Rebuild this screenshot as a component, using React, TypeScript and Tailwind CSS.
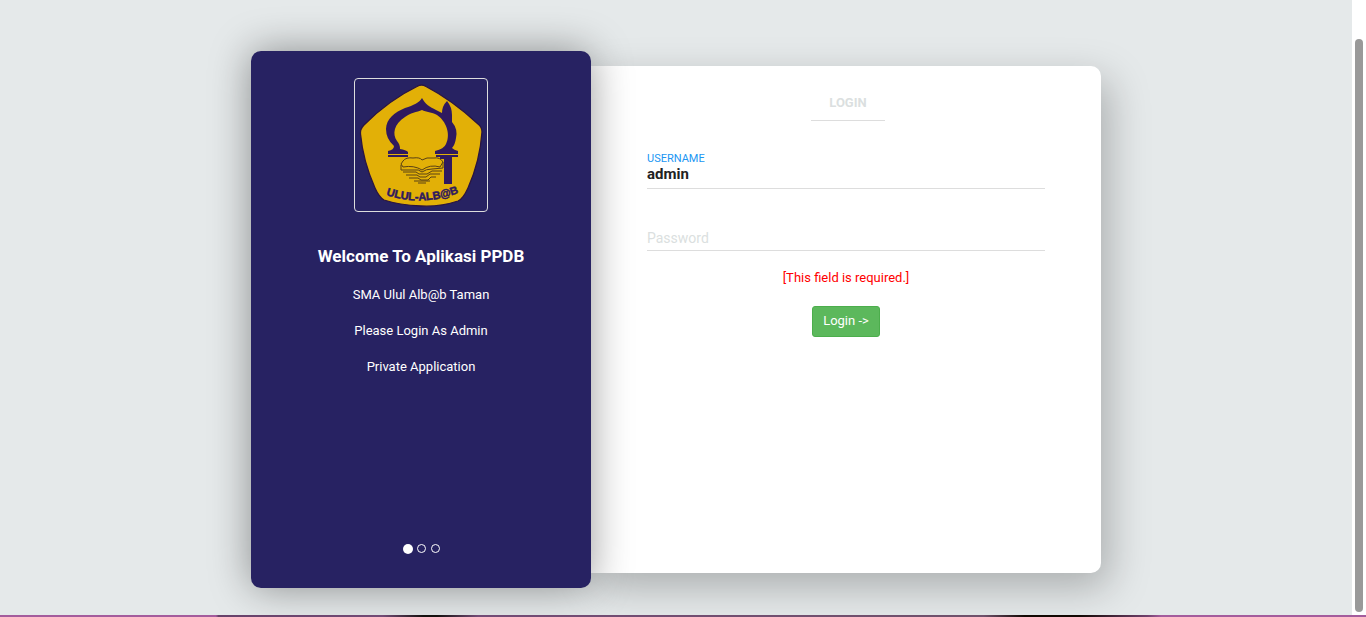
import { useState } from 'react';

function SchoolLogo() {
  return (
    <svg viewBox="0 0 150 150" className="size-full" role="img" aria-label="Ulul-Alb@b">
      <path
        d="M71 16.5 Q75.5 13.5 80 16.5 Q106 30 132 54 Q136 57 136 62 Q134 91 122 118 Q117 129 112 131 Q94 137 75 136 Q53 135 38 130 Q33 127 29 118 Q17 91 14.5 64 Q14 59 18 55 Q43 30 71 16.5Z"
        fill="#e2b007"
        stroke="#2b1540"
        strokeWidth="1.3"
      />
      <g fill="#2f195f">
        <path
          fillRule="evenodd"
          d="M76 28 C79 34 84 37 90 40 L96 43 Q96 36 101 31 Q106 37 106 45 V52 Q112 59 110 68 Q109 75 106 78 Q108 80 112 81 V84 H89 V81 Q98 79 100 74 C105 64 100 51 91 45 C86 42 80 42 76 40 C71 42 64 43 59 47 C48 54 46 64 51 71 Q54 74 54 79 Q60 80 62 82 V84 H42 V81 Q48 80 48 76 Q40 69 40 59 C40 49 49 42 59 38 C68 35 73 33 76 28Z"
        />
        <path d="M42 85H62V87H42ZM90 85H112V87H90ZM98 87H106V114H98Z" />
        <path d="M94 87H100V89H94Z" />
      </g>
      <g fill="none" stroke="#594016" strokeWidth="1">
        <path d="M57 91 Q60 87 67 88 Q74 87 76 90 Q80 87 88 88 Q94 87 97 92 L94 97 Q84 94 76 100 Q68 95 57 97 L55 94Z" />
        <path d="M55 95V100H67Q73 99 76 102Q80 99 86 99L97 98V92M57 102H70L73 104H81L86 101H96M60 105H71L74 107H80L84 104H94M63 108H72L75 110H82L85 107H90M68 111H84M72 113H80" />
      </g>
      <path id="logo-name" d="M40 125 Q75 137 113 123" fill="none" />
      <text
        className="font-['Liberation_Sans'] text-[11px] font-bold"
        fill="#2f195f"
        stroke="#2f195f"
        strokeWidth=".5"
      >
        <textPath href="#logo-name" startOffset="50%" textAnchor="middle">
          ULUL-ALB@B
        </textPath>
      </text>
    </svg>
  );
}

function WelcomePanel() {
  return (
    <section className="z-10 flex w-2/5 flex-col items-center rounded-[10px] bg-[#272262] px-6 pt-[27px] pb-[34px] text-center text-white shadow-[0_0_40px_rgba(0,0,0,0.4)]">
      <div className="size-[134px] overflow-hidden rounded-[4px] border border-[#dddddd]">
        <div className="-m-[9px] size-[150px]">
          <SchoolLogo />
        </div>
      </div>
      <h1 className="mt-8 text-[17px] leading-6 font-bold">Welcome To Aplikasi PPDB</h1>
      <div className="mt-[17px] flex flex-col gap-4 text-[13px] leading-5">
        <p>SMA Ulul Alb@b Taman</p>
        <p>Please Login As Admin</p>
        <p>Private Application</p>
      </div>
      <div className="mt-auto flex items-start gap-1" aria-hidden="true">
        <span className="size-[10px] rounded-full bg-white" />
        <span className="size-[9px] rounded-full border border-white" />
        <span className="ml-[1px] size-[9px] rounded-full border border-white" />
      </div>
    </section>
  );
}

function LoginForm() {
  const [username, setUsername] = useState('admin');
  const [password, setPassword] = useState('');

  return (
    <form
      className="my-[15px] flex flex-1 flex-col items-center rounded-r-[10px] bg-white px-14 pt-[26px] shadow-[8px_14px_40px_rgba(0,0,0,0.26)]"
      onSubmit={(e) => e.preventDefault()}
    >
      <h2 className="ml-1 border-b border-[#dddddd] px-[18px] pt-[1px] pb-[7px] text-[13px] leading-5 font-bold text-[#dbdfe0]">
        LOGIN
      </h2>
      <div className="mt-[30px] flex w-full flex-col">
        <label htmlFor="username" className="pt-[1px] text-[11px] leading-[14px] text-[#2196f3]">
          USERNAME
        </label>
        <input
          id="username"
          value={username}
          onChange={(e) => setUsername(e.target.value)}
          className="h-[23px] w-full border-b border-[#dddddd] pb-[6px] text-[15px] leading-4 font-bold text-[#222222] outline-none"
        />
      </div>
      <input
        id="password"
        type="password"
        aria-label="Password"
        placeholder="Password"
        value={password}
        onChange={(e) => setPassword(e.target.value)}
        className="mt-[38px] h-6 w-full border-b border-[#dddddd] pb-[2px] text-[14px] outline-none placeholder:text-[#dbdfe0]"
      />
      <p className="mt-[17px] text-[13px] leading-5 text-[#ff0000]">[This field is required.]</p>
      <button
        type="submit"
        className="mt-[18px] rounded-[3px] border border-[#4cae4c] bg-[#5cb85c] px-[10px] pt-1 pb-[5px] text-[13px] leading-5 text-white"
      >
        Login -&gt;
      </button>
    </form>
  );
}

export default function App() {
  return (
    <div className="flex min-h-screen flex-col font-['Roboto',sans-serif]">
      <div className="flex flex-1">
        <main className="flex flex-1 items-center justify-center overflow-hidden bg-[#e5e9ea] pt-6">
          <div className="flex min-h-[537px] w-full max-w-[850px]">
            <WelcomePanel />
            <LoginForm />
          </div>
        </main>
        <div className="flex w-[14px] flex-col bg-white px-[3px] pt-[39px] pb-[3px]" aria-hidden="true">
          <div className="flex-1 rounded-full bg-[#999999]" />
        </div>
      </div>
      <div className="h-[2px] bg-[linear-gradient(90deg,#a45c9d_0%,#a45c9d_15.8%,#67416a_16%,#734b76_28%,#15110f_31%,#15110f_32%,#734b76_35%,#70526c_72%,#120803_75%,#120803_79%,#70406c_84%,#a45c9d_85%)]" />
    </div>
  );
}
